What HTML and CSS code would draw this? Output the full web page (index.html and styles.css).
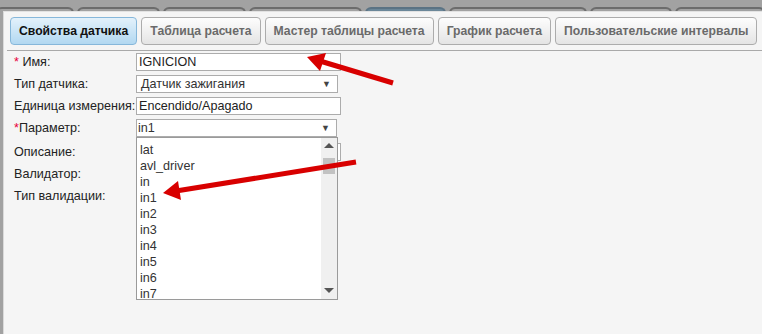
FILE: index.html
```html
<!DOCTYPE html>
<html lang="ru">
<head>
    <meta charset="UTF-8">
    <title>Свойства датчика</title>
    <link rel="stylesheet" href="styles.css">
</head>
<body>
    <div class="back-tabs">
        <span class="back-tab first"></span>
        <span class="back-tab" style="width: 83px"></span>
        <span class="back-tab" style="width: 83px"></span>
        <span class="back-tab" style="width: 113px"></span>
        <span class="back-tab active" style="width: 81px"></span>
        <span class="back-tab" style="width: 138px"></span>
        <span class="back-tab" style="width: 82px"></span>
        <span class="back-tab last"></span>
    </div>

    <div class="dialog">
        <div class="tabs">
            <button class="tab selected">Свойства датчика</button>
            <button class="tab">Таблица расчета</button>
            <button class="tab">Мастер таблицы расчета</button>
            <button class="tab">График расчета</button>
            <button class="tab">Пользовательские интервалы</button>
        </div>

        <div class="form">
            <label class="lbl"><span class="req">*</span> Имя:</label>
            <div class="field"><input class="inp" type="text" value="IGNICION"></div>

            <label class="lbl">Тип датчика:</label>
            <div class="field"><div class="sel">Датчик зажигания<span class="caret">▼</span></div></div>

            <label class="lbl">Единица измерения:</label>
            <div class="field"><input class="inp" type="text" value="Encendido/Apagado"></div>

            <label class="lbl"><span class="req">*</span>Параметр:</label>
            <div class="field param">
                <div class="sel narrow">in1<span class="caret">▼</span></div>
                <div class="droplist">
                    <ul>
                        <li>lat</li>
                        <li>avl_driver</li>
                        <li>in</li>
                        <li>in1</li>
                        <li>in2</li>
                        <li>in3</li>
                        <li>in4</li>
                        <li>in5</li>
                        <li>in6</li>
                        <li>in7</li>
                    </ul>
                    <div class="scroll">
                        <span class="arr up"></span>
                        <span class="thumb"></span>
                        <span class="arr down"></span>
                    </div>
                </div>
            </div>

            <label class="lbl gap">Описание:</label>
            <div class="field gap"><input class="inp" type="text"></div>

            <label class="lbl">Валидатор:</label>
            <div class="field"><div class="sel"></div></div>

            <label class="lbl">Тип валидации:</label>
            <div class="field"><div class="sel"></div></div>
        </div>
    </div>

    <!-- стрелки поверх скриншота -->
    <svg class="arrows" width="762" height="334" viewBox="0 0 762 334">
        <line x1="393" y1="83" x2="320" y2="61" stroke="#d80000" stroke-width="5"/>
        <polygon points="307,57 326,53 320,71" fill="#d80000"/>
        <line x1="356" y1="162" x2="176" y2="191" stroke="#d80000" stroke-width="5"/>
        <polygon points="163,193 178,181 181,200" fill="#d80000"/>
    </svg>
</body>
</html>
```

FILE: styles.css
```css
body {
    margin: 0;
    padding: 0;
    width: 762px;
    height: 334px;
    overflow: hidden;
    position: relative;
    background: #a2a2a2;
    font-family: 'Liberation Sans', Arial, sans-serif;
    font-size: 12.6px;
    color: #222;
}
.back-tabs {
    display: flex;
    gap: 3px;
    height: 11px;
    padding-top: 7px;
    box-sizing: border-box;
    overflow: hidden;
}
.back-tab {
    display: block;
    height: 8px;
    border: 2px solid #6c6c6c;
    border-bottom: none;
    border-radius: 6px 6px 0 0;
    box-sizing: border-box;
    flex: none;
}
.back-tab.first {
    width: 78px;
    margin-left: -4px;
}
.back-tab.last {
    width: 90px;
}
.back-tab.active {
    background: #6b8799;
    border-color: #5b7384;
}
.dialog {
    margin-left: 3px;
    height: 323px;
    background: #f5f5f5;
    border-top: 1px solid #e2e2e2;
    border-left: 1px solid #dadada;
    box-sizing: border-box;
}
.tabs {
    display: flex;
    gap: 4px;
    margin-left: 3px;
    padding: 5px 0 5px 3px;
    border-bottom: 1px solid #a9a9a9;
}
.tab {
    flex: none;
    height: 28px;
    margin: 0;
    padding: 0 8px;
    white-space: nowrap;
    font-family: 'Liberation Sans', Arial, sans-serif;
    font-size: 12.2px;
    font-weight: bold;
    color: #6a6a6a;
    background: linear-gradient(#fdfdfd, #e4e4e4);
    border: 1px solid #acacac;
    border-radius: 4px;
    cursor: pointer;
}
.tab.selected {
    color: #111;
    background: linear-gradient(#e3f1fb, #b2d8f1);
    border-color: #86b7da;
}
.form {
    display: grid;
    grid-template-columns: 122px 210px;
    row-gap: 4px;
    padding: 2px 0 0 10px;
}
.lbl {
    line-height: 18px;
    white-space: nowrap;
}
.req {
    color: #e8003a;
}
.field {
    height: 18px;
}
.gap {
    margin-top: 2px;
}
.inp {
    display: block;
    width: 205px;
    height: 18px;
    margin: 0;
    padding: 0 2px;
    border: 1px solid #acacac;
    background: #fff;
    box-sizing: border-box;
    font-family: 'Liberation Sans', Arial, sans-serif;
    font-size: 12.6px;
    color: #222;
}
.sel {
    position: relative;
    width: 202px;
    height: 18px;
    padding-left: 4px;
    border: 1px solid #acacac;
    background: #fff;
    box-sizing: border-box;
    line-height: 16px;
    color: #333;
}
.sel.narrow {
    width: 201px;
    padding-left: 1px;
}
.caret {
    position: absolute;
    right: 6px;
    top: 0;
    font-size: 9px;
    color: #444;
}
.param {
    position: relative;
    z-index: 2;
}
.droplist {
    position: absolute;
    top: 18px;
    left: 0;
    width: 202px;
    height: 163px;
    display: flex;
    border: 1px solid #9a9a9a;
    background: #fff;
    box-sizing: border-box;
}
.droplist ul {
    flex: 1;
    margin: 0;
    padding: 3px 0 0 3px;
    list-style: none;
}
.droplist li {
    height: 16px;
    line-height: 18px;
    color: #333;
}
.droplist li:last-child {
    height: 14px;
}
.scroll {
    position: relative;
    width: 16px;
    background: #f0f0f0;
}
.arr {
    position: absolute;
    left: 3px;
    width: 0;
    height: 0;
    border-left: 5px solid transparent;
    border-right: 5px solid transparent;
}
.arr.up {
    top: 5px;
    border-bottom: 5px solid #555;
}
.arr.down {
    bottom: 6px;
    border-top: 5px solid #555;
}
.thumb {
    position: absolute;
    left: 2px;
    top: 20px;
    width: 12px;
    height: 16px;
    background: #c2c2c2;
}
.arrows {
    position: absolute;
    left: 0;
    top: 0;
    z-index: 5;
    pointer-events: none;
}
```
